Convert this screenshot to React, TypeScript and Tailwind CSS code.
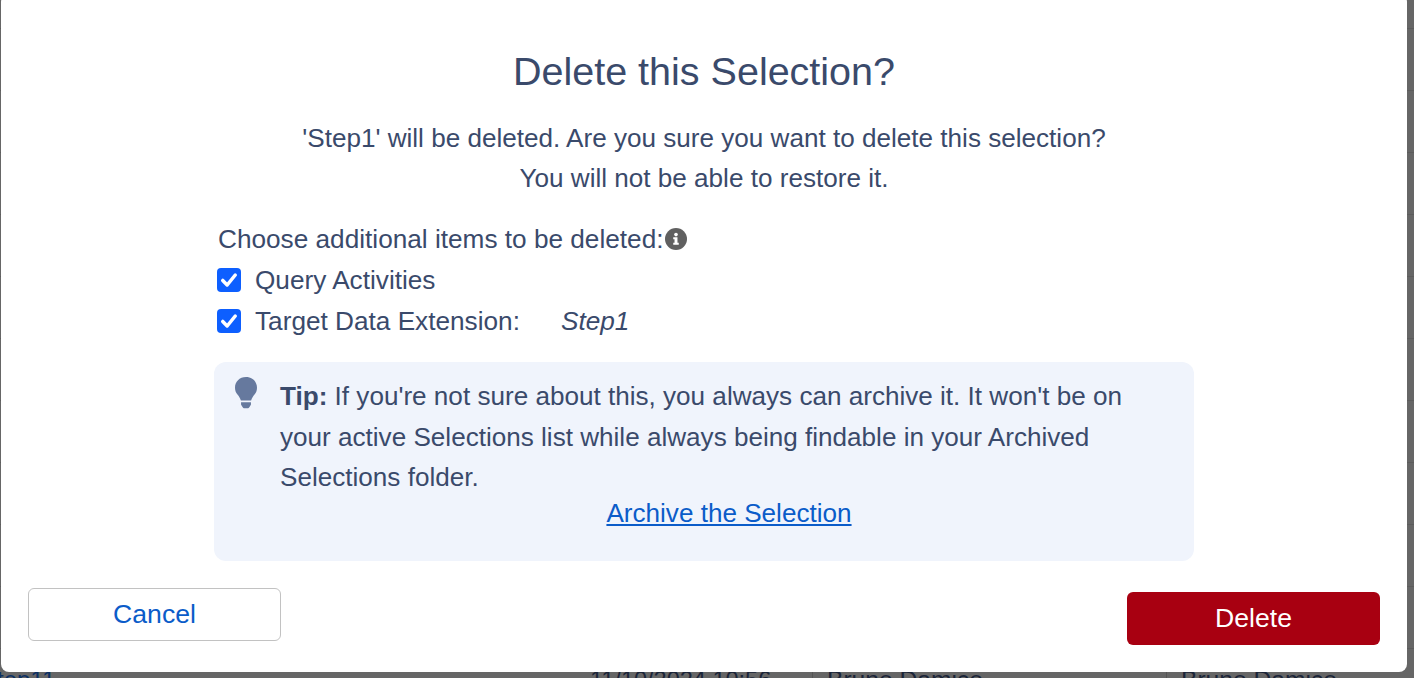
import React from "react";

function Check() {
  return (
    <span className="flex h-6 w-6 shrink-0 items-center justify-center rounded-[4px] bg-[#0d5fff]">
      <svg viewBox="0 0 24 24" className="h-[20px] w-[20px]" fill="none" stroke="#fff" strokeWidth="4.2" strokeLinecap="round" strokeLinejoin="round">
        <path d="M4.5 12.5 L9.8 18 L19.5 6" />
      </svg>
    </span>
  );
}

const rows = [
  { name: "" },
  { name: "Step" },
  { name: "Step" },
  { name: "" },
  { name: "" },
  { name: "Step" },
  { name: "" },
  { name: "Step" },
  { name: "" },
  { name: "" },
];

export default function App() {
  return (
    <div className="relative h-[678px] w-[1414px] overflow-hidden bg-[#666666] font-['Liberation_Sans',Arial,sans-serif] text-[#3a4a6b]">
      <div className="flex h-full flex-col">
        <div className="h-[29px] shrink-0 border-b border-[#5c5c5c]" />
        {rows.map((r, i) => (
          <div key={i} className="flex h-[62px] shrink-0 items-center border-b border-[#5c5c5c] text-[24px] text-[#0b2f63]">
            <span>{r.name}</span>
          </div>
        ))}
        <div className="flex h-[62px] shrink-0 items-center text-[24px] leading-[62px] text-[#1a2438]">
          <div className="-ml-[19px] w-[609px] text-[#0b2f63]">Step11</div>
          <div className="w-[222px] text-[23.5px]">11/10/2024 10:56</div>
          <div className="h-full w-[354px] border-l border-[#555] pl-[14px] text-[24.6px]">Bruno Damico</div>
          <div className="h-full flex-1 border-l border-[#555] pl-[14px] text-[24.6px]">Bruno Damico</div>
        </div>
      </div>

      <div className="absolute left-[1px] top-[-6px] flex h-[678px] w-[1406px] flex-col rounded-[8px] bg-white">
        <div className="flex flex-1 flex-col items-center pt-[49px]">
          <h1 className="text-[39.5px] font-normal leading-[56px]">Delete this Selection?</h1>
          <p className="mt-[19px] text-center text-[26.1px] leading-[40px]">
            'Step1' will be deleted. Are you sure you want to delete this selection?
            <br />
            You will not be able to restore it.
          </p>
          <div className="mt-[21px] w-[980px] self-center">
            <div className="flex items-center pl-[4px] text-[26.2px] leading-[40px]">
              Choose additional items to be deleted:
              <svg viewBox="0 0 24 24" className="ml-[2px] h-[22px] w-[22px]">
                <circle cx="12" cy="12" r="12" fill="#606060" />
                <circle cx="12" cy="7.2" r="2" fill="#fff" />
                <path d="M9 10.2h4.6v5.8h1.4v2.2H9V16h1.4v-3.6H9z" fill="#fff" />
              </svg>
            </div>
            <div className="flex h-[41px] items-center gap-[14px] pl-[3px] text-[26.2px]">
              <Check />
              <span className="pt-[2px]">Query Activities</span>
            </div>
            <div className="flex h-[41px] items-center gap-[14px] pl-[3px] text-[26.2px]">
              <Check />
              <span className="w-[292px] pt-[2px]">Target Data Extension:</span>
              <i className="pt-[2px]">Step1</i>
            </div>
            <div className="mt-[21px] flex h-[199px] rounded-[12px] bg-[#f0f4fc] pl-[19px] pr-[16px] pt-[14px]">
              <svg viewBox="0 0 26 36" className="mt-[1px] h-[33px] w-[26px] shrink-0" fill="#66799e">
                <path d="M13 0C5.8 0 1 5.3 1 11.6c0 3 1.1 5.7 2.9 7.8 1.1 1.3 2.8 4 3.5 6.1h11.2c.7-2.1 2.4-4.8 3.5-6.1 1.8-2.1 2.9-4.8 2.9-7.8C25 5.3 20.2 0 13 0z" />
                <path d="M7.6 27.5h10.8v2.2c0 .6-.2 1.1-.6 1.5l-1 1.4c-.5.7-1.2 1.4-2.2 1.4h-3.2c-1 0-1.7-.7-2.2-1.4l-1-1.4c-.4-.4-.6-.9-.6-1.5z" />
              </svg>
              <div className="ml-[21px] flex-1 text-[26.1px] leading-[40.5px]">
                <p className="pr-[40px]">
                  <b>Tip:</b> If you're not sure about this, you always can archive it. It won't be on your active Selections list while always being findable in your Archived Selections folder.
                </p>
                <p className="-mt-[5px] text-center">
                  <a className="text-[#0b5cc9] underline">Archive the Selection</a>
                </p>
              </div>
            </div>
          </div>
        </div>
        <div className="flex items-start justify-between pb-[27px] pl-[27px] pr-[27px]">
          <button className="h-[53px] w-[253px] rounded-[6px] border border-[#c2c2c2] bg-white text-[26.6px] text-[#0b5cc9]">Cancel</button>
          <button className="mt-[4px] h-[53px] w-[253px] rounded-[6px] bg-[#a80011] text-[26.6px] text-white">Delete</button>
        </div>
      </div>
    </div>
  );
}
